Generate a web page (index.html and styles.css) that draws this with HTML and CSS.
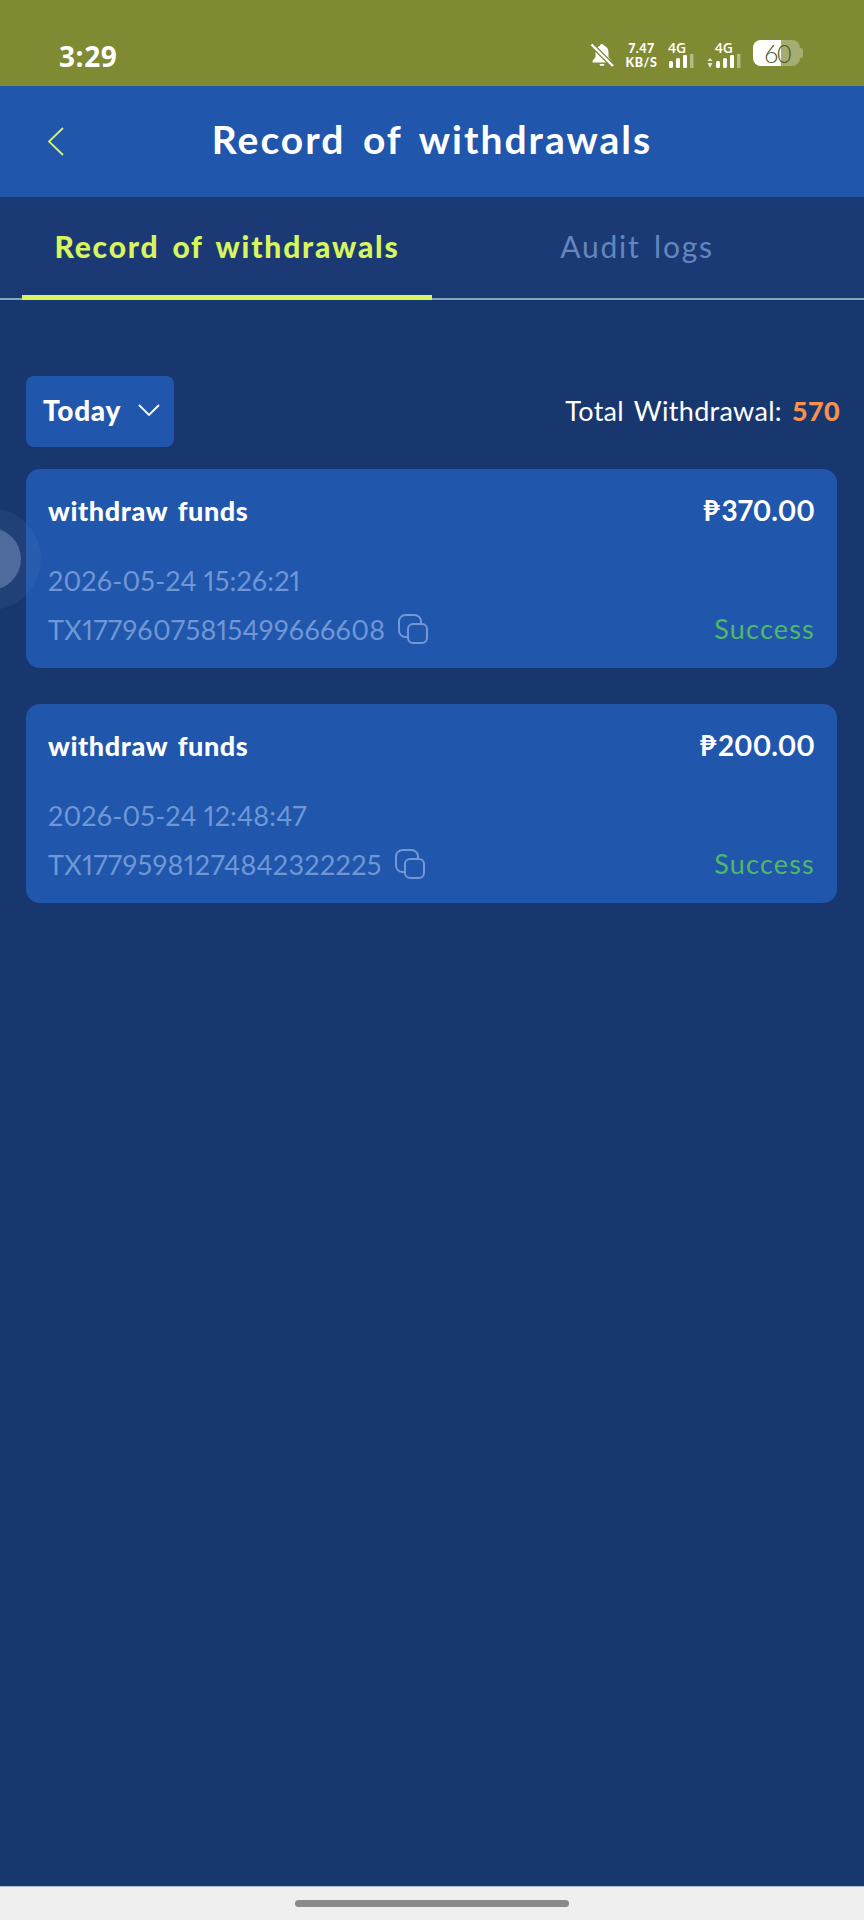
FILE: index.html
```html
<!DOCTYPE html>
<html lang="en">
<head>
<meta charset="utf-8">
<title>Record of withdrawals</title>
<link rel="stylesheet" href="styles.css">
</head>
<body>
<div class="screen">
  <div class="status">
    <span class="time">3:29</span>
    <div class="status-icons">
      <svg class="bell" width="24" height="26" viewBox="0 0 24 26"><path d="M12 2c-1 0-2 .7-2 1.800C6.800 4.700 5.500 7.300 5.500 10.500v4.500L2.500 19v1.500h19V19l-3-4v-4.500c0-3.200-1.300-5.800-4.500-6.700C14 2.700 13 2 12 2z" fill="#fff"/><path d="M9.500 22h5a2.500 2 0 0 1-5 0z" fill="#fff"/><path d="M1.500 2.500 23 24" stroke="#7f8a33" stroke-width="5"/><path d="M1.500 2.500 23 24" stroke="#fff" stroke-width="2.400"/></svg>
      <div class="speed"><span>7.47</span><span>KB/S</span></div>
      <div class="net">
        <span class="net-label">4G</span>
        <svg width="26" height="14" viewBox="0 0 26 14"><g fill="#fff"><rect x="1" y="7" width="4" height="7" rx="1.500"/><rect x="8" y="4" width="4" height="10" rx="1.500"/><rect x="15" y="1" width="4" height="13" rx="1"/></g><rect x="22" y="0" width="3.500" height="14" fill="#fff" opacity=".4"/></svg>
      </div>
      <div class="net net-up">
        <span class="net-label">4G</span>
        <svg width="34" height="14" viewBox="0 0 34 14"><g fill="#fff"><path d="M3 4 5.500 7H.5zM3 14 .5 9h5z" opacity=".8"/><rect x="9" y="7" width="4" height="7" rx="1.500"/><rect x="16" y="4" width="4" height="10" rx="1.500"/><rect x="23" y="1" width="4" height="13" rx="1"/></g><rect x="30" y="0" width="3.500" height="14" fill="#fff" opacity=".4"/></svg>
      </div>
      <div class="battery"><div class="battery-fill"></div><span class="battery-text">60</span><i class="battery-tip"></i></div>
    </div>
  </div>

  <header class="topbar">
    <svg class="back" width="18" height="30" viewBox="0 0 18 30"><path d="M16 2 2 15.500 16 29" fill="none" stroke="#d8f55e" stroke-width="1.800"/></svg>
    <h1 class="title">Record of withdrawals</h1>
  </header>

  <nav class="tabs">
    <div class="tab tab-active">Record of withdrawals</div>
    <div class="tab">Audit logs</div>
  </nav>

  <main class="content">
    <div class="filter-row">
      <div class="filter">
        <span>Today</span>
        <svg width="22" height="14" viewBox="0 0 22 14"><path d="M1 2l10 10L21 2" fill="none" stroke="#fff" stroke-width="1.800"/></svg>
      </div>
      <div class="total">Total Withdrawal: <b>570</b></div>
    </div>

    <article class="card">
      <div class="card-head"><span class="card-name">withdraw funds</span><span class="amount">₱ 370.00</span></div>
      <div class="date">2026-05-24 15:26:21</div>
      <div class="card-foot">
        <div class="tx"><span>TX17796075815499666608</span>
          <svg class="copy" width="32" height="32" viewBox="0 0 32 32"><rect x="2" y="2" width="22" height="22" rx="6.500" fill="none" stroke="#7298d6" stroke-width="2"/><rect x="11" y="11" width="19" height="19" rx="5" fill="#2056ab" stroke="#7298d6" stroke-width="2"/></svg>
        </div>
        <span class="state">Success</span>
      </div>
    </article>

    <article class="card">
      <div class="card-head"><span class="card-name">withdraw funds</span><span class="amount">₱ 200.00</span></div>
      <div class="date">2026-05-24 12:48:47</div>
      <div class="card-foot">
        <div class="tx"><span>TX17795981274842322225</span>
          <svg class="copy" width="32" height="32" viewBox="0 0 32 32"><rect x="2" y="2" width="22" height="22" rx="6.500" fill="none" stroke="#7298d6" stroke-width="2"/><rect x="11" y="11" width="19" height="19" rx="5" fill="#2056ab" stroke="#7298d6" stroke-width="2"/></svg>
        </div>
        <span class="state">Success</span>
      </div>
    </article>
  </main>

  <div class="navbar"><div class="handle"></div></div>
  <div class="ball"><div class="ball-core"></div></div>
</div>
</body>
</html>
```

FILE: styles.css
```css
* { box-sizing: border-box; }
html, body { margin: 0; padding: 0; }
body { font-family: Lato, "Noto Sans", sans-serif; color: #fff; background: #19376f; }
.screen { position: relative; width: 864px; height: 1920px; display: flex; flex-direction: column; overflow: hidden; background: #19376f; }

.status { height: 86px; flex: none; background: #7f8a33; display: flex; align-items: flex-start; justify-content: space-between; padding: 40px 0 0 59px; }
.time { font-family: "Open Sans", sans-serif; font-size: 28px; font-weight: 700; line-height: 33px; letter-spacing: .6px; }
.status-icons { display: flex; align-items: flex-start; padding-right: 64px; }
.bell { margin: 2px 0 0 0; }
.speed { display: flex; flex-direction: column; margin: 2px 0 0 11px; width: 33px; font-size: 12.500px; font-weight: 900; line-height: 14px; align-items: center; white-space: nowrap; letter-spacing: .5px; }
.net { display: flex; flex-direction: column; align-items: flex-start; margin: 1px 0 0 10px; }
.net-label { font-family: "Open Sans", sans-serif; font-size: 14px; line-height: 13px; font-weight: 600; }
.net svg { display: block; margin-top: 0; }
.net-up { margin-left: 13px; align-items: flex-end; }
.net-up .net-label { margin-right: 8px; }
.battery { position: relative; width: 47px; height: 26px; border-radius: 8px; margin: 0 0 0 12px; background: rgba(255,255,255,.3); }
.battery-fill { width: 28px; height: 26px; background: #fff; border-radius: 8px 0 0 8px; }
.battery-text { position: absolute; left: 11px; top: -1px; font-size: 25px; line-height: 28px; font-weight: 300; color: #4f5723; letter-spacing: -1.500px; }
.battery-tip { position: absolute; right: -3px; top: 8px; width: 3px; height: 10px; background: rgba(255,255,255,.3); border-radius: 0 2px 2px 0; }

.topbar { height: 111px; flex: none; background: #2056ab; display: flex; align-items: center; justify-content: center; position: relative; }
.back { position: absolute; left: 47px; top: 40px; }
.title { margin: 0; font-size: 39px; font-weight: 700; line-height: 48px; word-spacing: 6px; letter-spacing: 2px; position: relative; top: -3px; }

.tabs { height: 103px; flex: none; display: flex; padding-left: 22px; border-bottom: 2px solid #7ea9b8; background: #1b3a75; }
.tab { width: 410px; height: 103px; display: flex; align-items: center; justify-content: center; font-size: 30px; color: #6387bd; padding-bottom: 6px; word-spacing: 4px; letter-spacing: 1.800px; }
.tab-active { color: #d8f55e; font-weight: 900; border-bottom: 5px solid #d8f55e; padding-bottom: 1px; word-spacing: 4px; letter-spacing: 1.800px; }

.content { flex: 1; padding: 76px 27px 0 26px; display: flex; flex-direction: column; }
.filter-row { display: flex; justify-content: space-between; align-items: center; height: 71px; margin-right: -3px; }
.filter { width: 148px; height: 71px; background: #2056ab; border-radius: 8px; display: flex; align-items: center; gap: 17px; padding-left: 17px; padding-bottom: 3px; font-size: 28px; font-weight: 900; letter-spacing: .7px; }
.total { font-size: 27px; font-weight: 400; word-spacing: 3px; letter-spacing: .3px; padding-bottom: 2px; }
.total b { color: #f59150; font-weight: 900; }

.card { height: 199px; background: #2056ab; border-radius: 14px; padding: 23px 22px 0 22px; margin-top: 22px; margin-bottom: 14px; display: flex; flex-direction: column; }
.card-head { display: flex; justify-content: space-between; align-items: center; height: 36px; }
.card-name { font-size: 27px; font-weight: 900; word-spacing: 3px; letter-spacing: .6px; }
.amount { font-size: 28px; font-weight: 700; word-spacing: -5px; font-variant-numeric: proportional-nums; }
.date { font-size: 27px; line-height: 36px; margin-top: 35px; color: #6f97d6; font-variant-numeric: proportional-nums; letter-spacing: .15px; }
.card-foot { display: flex; justify-content: space-between; align-items: center; margin-top: 12px; height: 36px; }
.tx { display: flex; align-items: center; gap: 12px; font-size: 27px; color: #6f97d6; font-variant-numeric: proportional-nums; letter-spacing: .33px; }
.copy { flex: none; }
.state { font-size: 27px; color: #4fb86a; letter-spacing: 1.200px; padding-bottom: 2px; }

.navbar { height: 34px; flex: none; background: #efefef; border-top: 1px solid #a9b8d0; display: flex; justify-content: center; padding-top: 13px; }
.handle { width: 274px; height: 7px; border-radius: 4px; background: #8a8a8a; }

.ball { position: absolute; left: -61px; top: 508px; width: 102px; height: 102px; border-radius: 50%; background: rgba(120,150,210,.1); display: flex; align-items: center; justify-content: center; }
.ball-core { width: 62px; height: 62px; border-radius: 50%; background: #4f6a9c; }
```
